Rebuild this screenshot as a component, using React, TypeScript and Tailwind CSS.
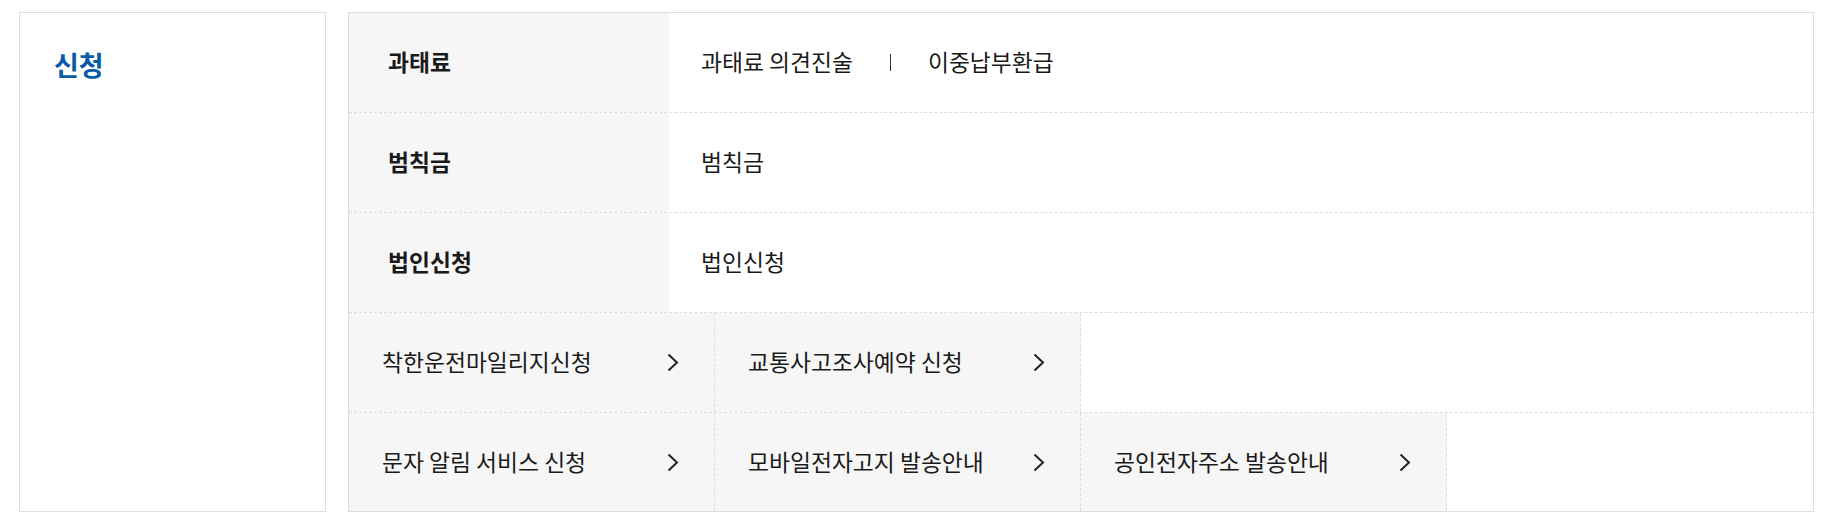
import { Fragment } from 'react';

const Chevron = () => (
  <svg width="12" height="19" viewBox="0 0 12 19" fill="none" className="shrink-0">
    <path d="M1.5 1.5 L10 9.5 L1.5 17.5" stroke="#222" strokeWidth="2" strokeLinejoin="miter" />
  </svg>
);

const rows = [
  { label: '과태료', links: ['과태료 의견진술', '이중납부환급'] },
  { label: '범칙금', links: ['범칙금'] },
  { label: '법인신청', links: ['법인신청'] },
];

const menus = [
  ['착한운전마일리지신청', '교통사고조사예약 신청'],
  ['문자 알림 서비스 신청', '모바일전자고지 발송안내', '공인전자주소 발송안내'],
];

const App = () => {
  return (
    <div
      className="flex gap-[22px] bg-white pl-[19px] pr-[20px] pt-[12px] pb-[15px] text-[#1a1a1a]"
      style={{ fontFamily: '"Noto Sans CJK KR", "Noto Sans", sans-serif' }}
    >
      <div className="w-[307px] shrink-0 border border-[#dedede] px-[34px] pt-[33px]">
        <h2 className="text-[27px] font-bold leading-[38px] text-[#0b5aa6]">신청</h2>
      </div>

      <div className="flex-1 border border-[#dedede]">
        {rows.map((row) => (
          <div key={row.label} className="flex h-[100px] border-b border-dashed border-[#dddddd]">
            <div className="flex w-[320px] shrink-0 items-center bg-[#f6f6f6] pl-[39px] text-[22.8px] font-bold">
              {row.label}
            </div>
            <div className="flex flex-1 items-center pl-[32px] text-[22.8px]">
              {row.links.map((link, i) => (
                <Fragment key={link}>
                  {i > 0 && <span className="mx-[37px] h-[17px] w-px bg-[#333]" />}
                  <span>{link}</span>
                </Fragment>
              ))}
            </div>
          </div>
        ))}

        {menus.map((line, r) => (
          <div
            key={r}
            className={
              r === 0
                ? 'grid h-[100px] grid-cols-4 border-b border-dashed border-[#dddddd]'
                : 'grid h-[98px] grid-cols-4'
            }
          >
            {line.map((item) => (
              <div
                key={item}
                className="flex items-center justify-between border-r border-dashed border-[#dddddd] bg-[#f6f6f6] pl-[33px] pr-[35px] text-[22.8px]"
              >
                <span>{item}</span>
                <Chevron />
              </div>
            ))}
          </div>
        ))}
      </div>
    </div>
  );
};

export default App;
